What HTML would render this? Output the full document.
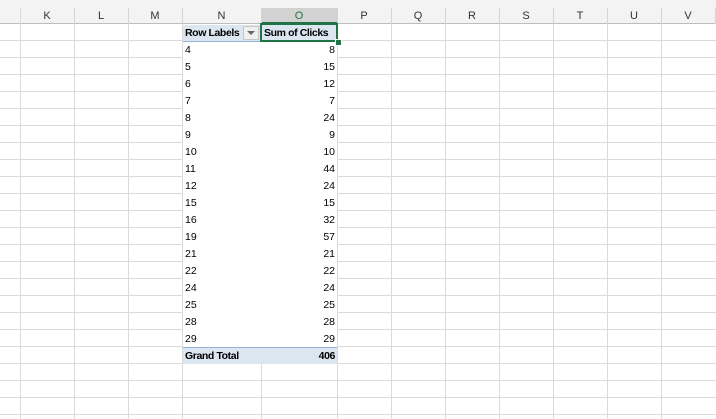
<!DOCTYPE html><html><head><style>
body{margin:0;width:716px;height:419px;overflow:hidden;background:#fff;font-family:"Liberation Sans",Calibri,sans-serif;font-size:11px;color:#000;position:relative}
.a{position:absolute}
.hd{position:absolute;top:8px;height:16px;line-height:16px;text-align:center;font-size:11px;color:#333;border-right:1px solid #d4d4d4;box-sizing:border-box}
.c{position:absolute;height:17px;line-height:18px;font-size:10.5px}
.b{font-weight:bold;letter-spacing:-0.4px}
</style></head><body>
<div class="a" style="left:0;top:0;width:716px;height:8px;background:#f3f3f3"></div>
<div class="a" style="left:0;top:8px;width:716px;height:16px;background:#f3f3f3;border-bottom:1px solid #bdbdbd;box-sizing:border-box"></div>
<div class="a" style="left:0;top:24px;width:716px;height:395px;background-image:linear-gradient(#dadada 1px,transparent 1px);background-size:100% 17px;background-position:0 16px"></div>
<div class="a" style="left:20px;top:8px;width:1px;height:411px;background:#dadada"></div>
<div class="a" style="left:74px;top:8px;width:1px;height:411px;background:#dadada"></div>
<div class="a" style="left:128px;top:8px;width:1px;height:411px;background:#dadada"></div>
<div class="a" style="left:182px;top:8px;width:1px;height:411px;background:#dadada"></div>
<div class="a" style="left:261px;top:8px;width:1px;height:411px;background:#dadada"></div>
<div class="a" style="left:337px;top:8px;width:1px;height:411px;background:#dadada"></div>
<div class="a" style="left:391px;top:8px;width:1px;height:411px;background:#dadada"></div>
<div class="a" style="left:445px;top:8px;width:1px;height:411px;background:#dadada"></div>
<div class="a" style="left:499px;top:8px;width:1px;height:411px;background:#dadada"></div>
<div class="a" style="left:553px;top:8px;width:1px;height:411px;background:#dadada"></div>
<div class="a" style="left:607px;top:8px;width:1px;height:411px;background:#dadada"></div>
<div class="a" style="left:661px;top:8px;width:1px;height:411px;background:#dadada"></div>
<div class="a" style="left:262px;top:8px;width:75px;height:16px;background:#d2d2d2;border-bottom:2px solid #217346;box-sizing:border-box"></div>
<div class="hd" style="left:20px;width:55px">K</div><div class="hd" style="left:74px;width:55px">L</div><div class="hd" style="left:128px;width:55px">M</div><div class="hd" style="left:182px;width:80px">N</div><div class="hd" style="left:261px;width:77px;color:#217346">O</div><div class="hd" style="left:337px;width:55px">P</div><div class="hd" style="left:391px;width:55px">Q</div><div class="hd" style="left:445px;width:55px">R</div><div class="hd" style="left:499px;width:55px">S</div><div class="hd" style="left:553px;width:55px">T</div><div class="hd" style="left:607px;width:55px">U</div><div class="hd" style="left:661px;width:55px">V</div>
<div class="a" style="left:183px;top:25px;width:154px;height:339px;background:#fff"></div>
<div class="a" style="left:183px;top:25px;width:154px;height:16px;background:#dce6f1;border-bottom:1px solid #95b3d7"></div>
<div class="a" style="left:183px;top:347px;width:154px;height:17px;background:#dce6f1;border-top:1px solid #95b3d7;box-sizing:border-box"></div>
<div class="c b" style="left:185px;top:24px">Row Labels</div>
<div class="a" style="left:243px;top:26px;width:16px;height:14px;background:#f0f0f0;border:1px solid #c8c8c8;box-sizing:border-box"></div>
<div class="a" style="left:247px;top:31px;width:0;height:0;border-left:4px solid transparent;border-right:4px solid transparent;border-top:4px solid #666"></div>
<div class="c b" style="left:264px;top:24px">Sum of Clicks</div>
<div class="a" style="left:260px;top:23px;width:78px;height:19px;border:2px solid #217346;box-sizing:border-box"></div>
<div class="a" style="left:335px;top:39px;width:5px;height:5px;background:#217346;border:1px solid #fff"></div>
<div id="rows"></div>
<div class="c b" style="left:185px;top:347px">Grand Total</div>
<div class="c b" style="left:262px;top:347px;width:73px;text-align:right">406</div>
<script>
var d=[[4,8],[5,15],[6,12],[7,7],[8,24],[9,9],[10,10],[11,44],[12,24],[15,15],[16,32],[19,57],[21,21],[22,22],[24,24],[25,25],[28,28],[29,29]],h='';
d.forEach(function(r,i){var t=41+i*17;h+='<div class="c" style="left:185px;top:'+t+'px">'+r[0]+'</div><div class="c" style="left:262px;top:'+t+'px;width:73px;text-align:right">'+r[1]+'</div>';});
document.getElementById('rows').outerHTML=h;
</script>
</body></html>
